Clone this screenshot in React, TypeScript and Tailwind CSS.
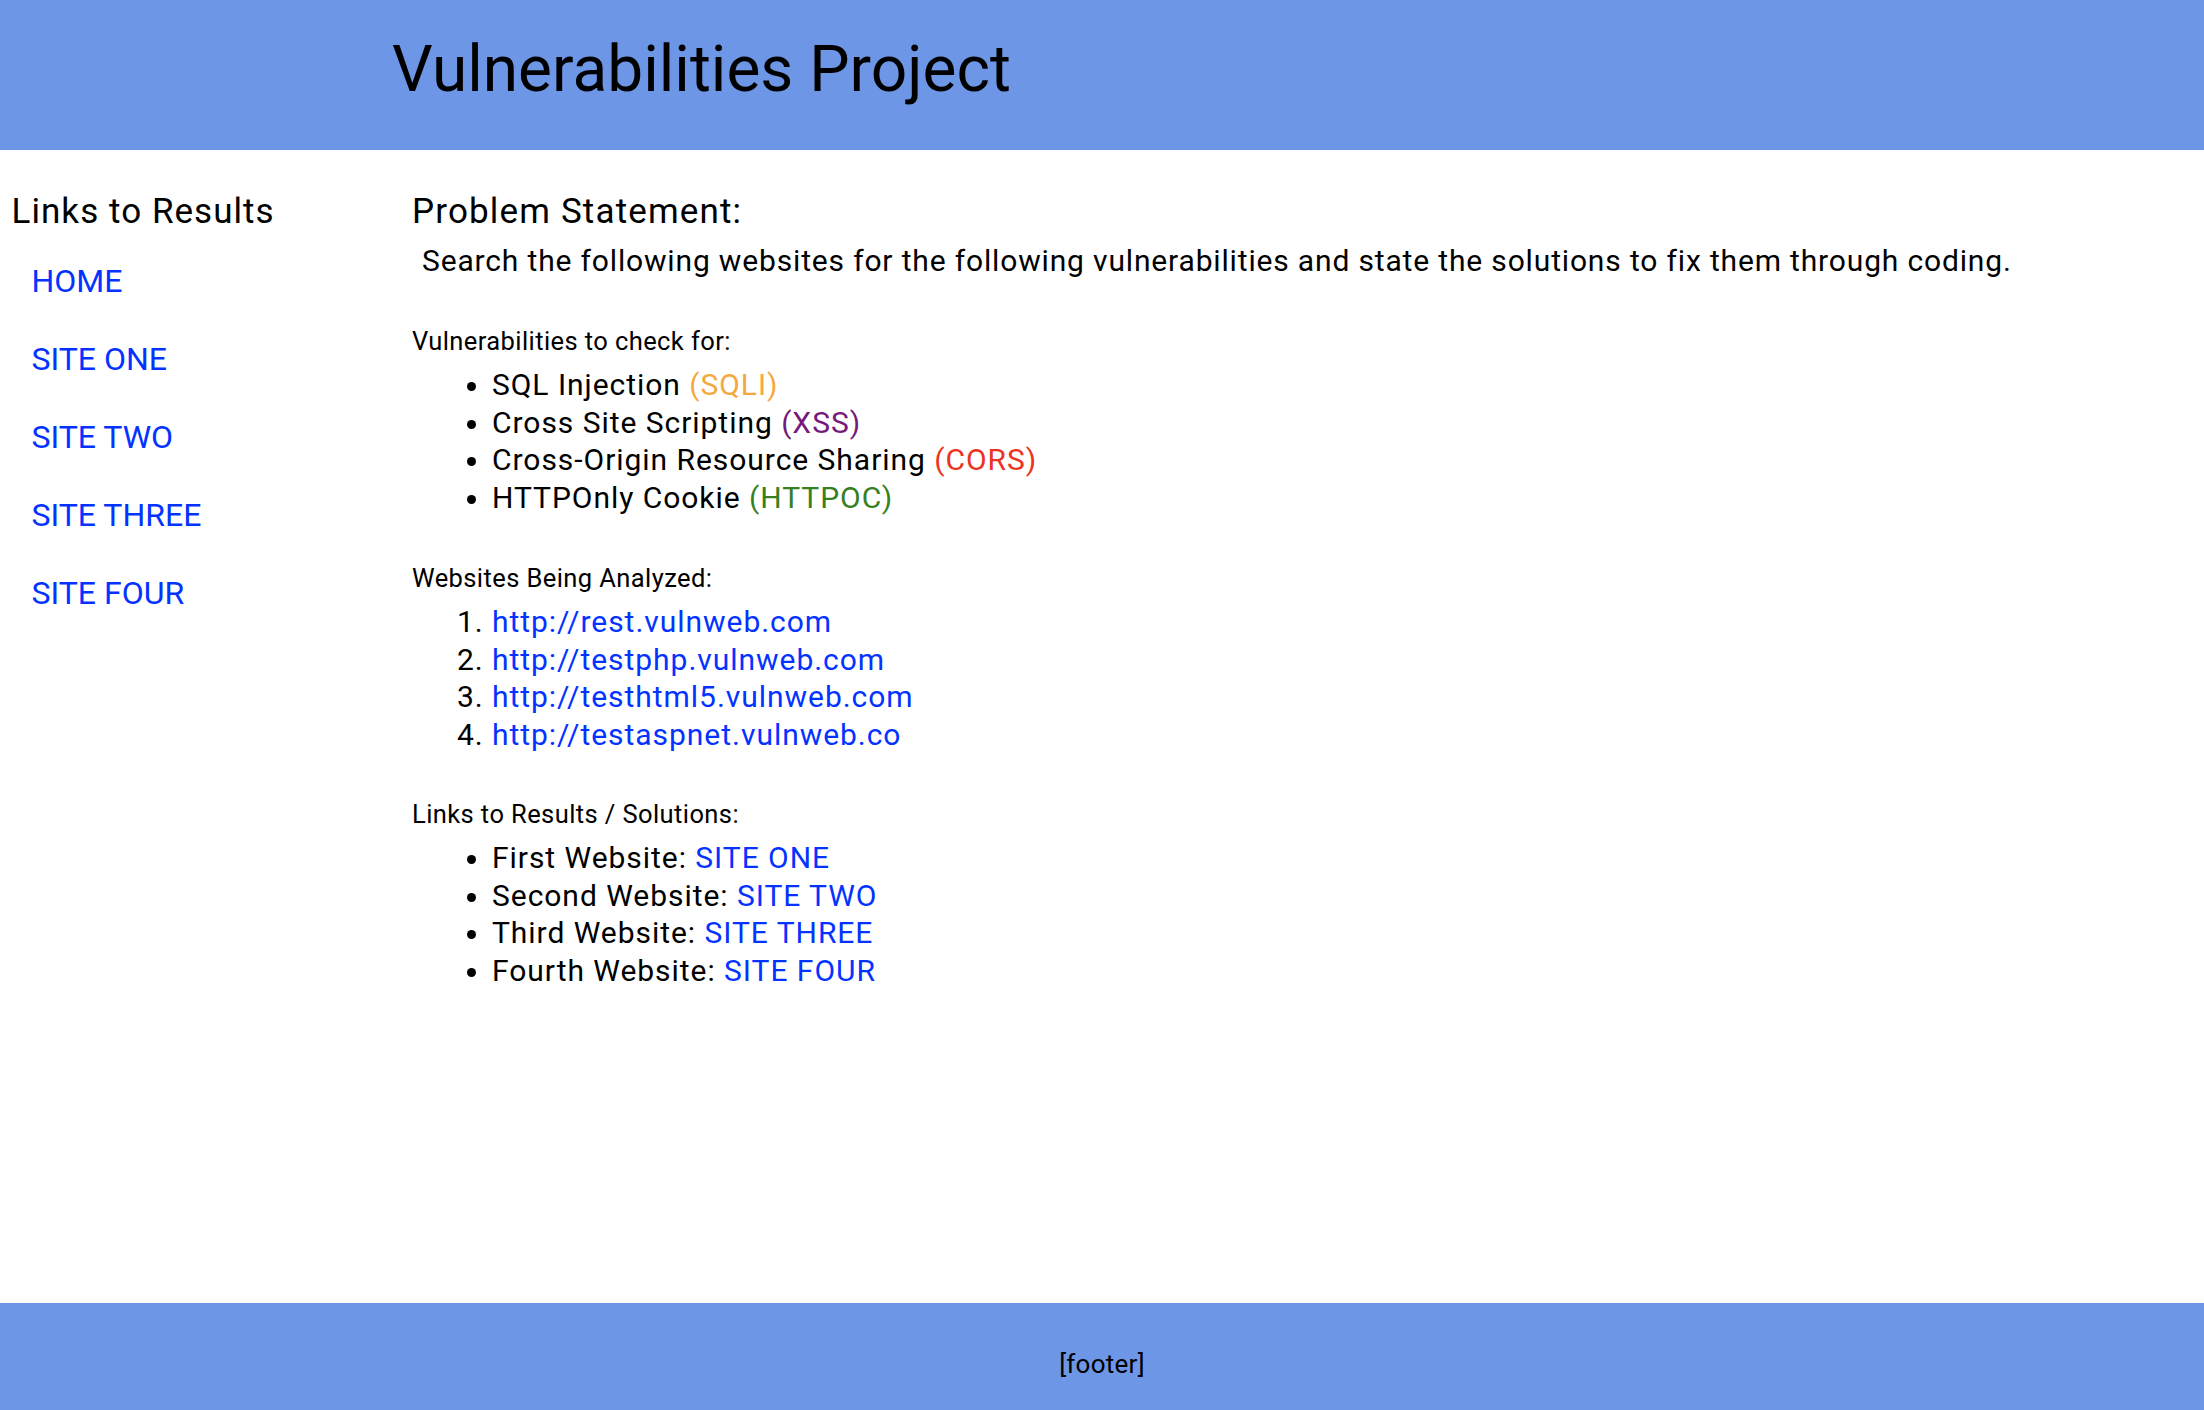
import React from "react";

const sideLinks = ["HOME", "SITE ONE", "SITE TWO", "SITE THREE", "SITE FOUR"];

const vulns = [
    { name: "SQL Injection", tag: "(SQLI)", color: "text-[#f5a83c]" },
    { name: "Cross Site Scripting", tag: "(XSS)", color: "text-[#75197d]" },
    { name: "Cross-Origin Resource Sharing", tag: "(CORS)", color: "text-[#eb3323]" },
    { name: "HTTPOnly Cookie", tag: "(HTTPOC)", color: "text-[#37801f]" },
];

const sites = [
    "http://rest.vulnweb.com",
    "http://testphp.vulnweb.com",
    "http://testhtml5.vulnweb.com",
    "http://testaspnet.vulnweb.co",
];

const results = [
    { label: "First Website:", link: "SITE ONE" },
    { label: "Second Website:", link: "SITE TWO" },
    { label: "Third Website:", link: "SITE THREE" },
    { label: "Fourth Website:", link: "SITE FOUR" },
];

export default function App() {
    return (
        <div className="min-h-screen flex flex-col bg-white text-black font-[Roboto,'Liberation_Sans',sans-serif]">
            <header className="h-[150px] shrink-0 bg-[#6d96e6] pl-[392px] pt-[38px]">
                <h1 className="text-[64px] leading-[64px] font-normal">Vulnerabilities Project</h1>
            </header>

            <div className="flex flex-1">
                <aside className="w-[412px] shrink-0 pl-[11.5px] pt-[42.5px]">
                    <h3 className="text-[35px] leading-[38px] tracking-[0.03em]">Links to Results</h3>
                    <nav className="mt-[11px]">
                        {sideLinks.map((l) => (
                            <a key={l} href="#" className="block pl-[20px] text-[32px] leading-[78px] text-[#0433ff]">
                                {l}
                            </a>
                        ))}
                    </nav>
                </aside>

                <main className="flex-1 pt-[42.5px]">
                    <h3 className="text-[35px] leading-[38px] tracking-[0.033em]">Problem Statement:</h3>
                    <p className="mt-[11.5px] pl-[10px] text-[30px] leading-[37.7px] tracking-[0.028em]">
                        Search the following websites for the following vulnerabilities and state the solutions to fix them through coding.
                    </p>

                    <section className="mt-[46.3px]">
                        <p className="text-[25.5px] leading-[30px] tracking-[0.016em]">Vulnerabilities to check for:</p>
                        <ul className="mt-[10px] pl-[80px] list-disc text-[30px] leading-[37.7px] tracking-[0.032em]">
                            {vulns.map((v) => (
                                <li key={v.name}>
                                    {v.name} <span className={v.color}>{v.tag}</span>
                                </li>
                            ))}
                        </ul>
                    </section>

                    <section className="mt-[46.2px]">
                        <p className="text-[25.5px] leading-[30px] tracking-[0.016em]">Websites Being Analyzed:</p>
                        <ol className="mt-[10px] pl-[80px] list-decimal text-[30px] leading-[37.7px] tracking-[0.032em]">
                            {sites.map((s) => (
                                <li key={s}>
                                    <a href="#" className="text-[#0433ff]">{s}</a>
                                </li>
                            ))}
                        </ol>
                    </section>

                    <section className="mt-[45.2px]">
                        <p className="text-[25.5px] leading-[30px] tracking-[0.016em]">Links to Results / Solutions:</p>
                        <ul className="mt-[10px] pl-[80px] list-disc text-[30px] leading-[37.7px] tracking-[0.032em]">
                            {results.map((r) => (
                                <li key={r.link}>
                                    {r.label} <a href="#" className="text-[#0433ff]">{r.link}</a>
                                </li>
                            ))}
                        </ul>
                    </section>
                </main>
            </div>

            <footer className="h-[107px] shrink-0 bg-[#6d96e6] flex items-center justify-center pt-[15px] text-[26px] tracking-[0.01em]">
                [footer]
            </footer>
        </div>
    );
}
